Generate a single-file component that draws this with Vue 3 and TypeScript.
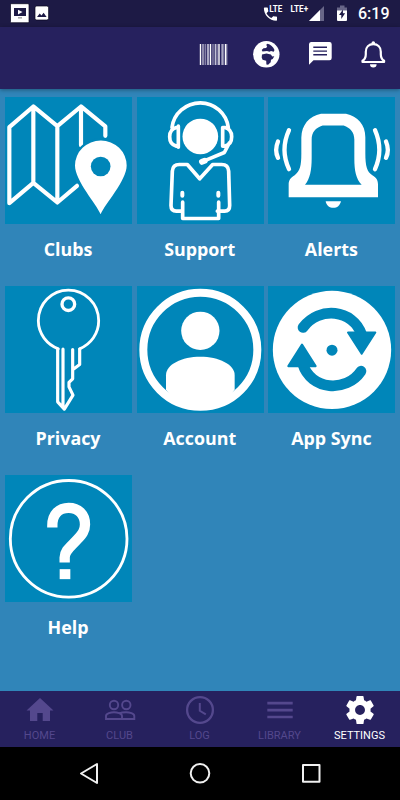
<script setup lang="ts">
interface Item {
  id: string
  label: string
  box: string
}

const items: Item[] = [
  { id: 'clubs', label: 'Clubs', box: '14 21 381 381' },
  { id: 'support', label: 'Support', box: '8 21 381 381' },
  { id: 'alerts', label: 'Alerts', box: '6 21 381 381' },
  { id: 'privacy', label: 'Privacy', box: '14 19 381 381' },
  { id: 'account', label: 'Account', box: '8 19 381 381' },
  { id: 'sync', label: 'App Sync', box: '6 19 381 381' },
  { id: 'help', label: 'Help', box: '14 15 381 381' },
]

const tabs: string[] = ['HOME', 'CLUB', 'LOG', 'LIBRARY', 'SETTINGS']
const active = 'SETTINGS'
</script>

<template>
  <div class="screen">
    <div class="status">
      <svg class="status-left" viewBox="0 0 60 27">
        <rect x="10.5" y="3.7" width="18.5" height="19" rx="1" fill="#fff" stroke="#08071c" stroke-width=".7" />
        <rect x="14" y="8" width="12" height="8" fill="#1d1a45" />
        <path d="M18 9.8l4.5 2.3-4.5 2.4z" fill="#fff" />
        <path d="M18 17.8h4" stroke="#aaa" stroke-width="1.6" />
        <rect x="35" y="6" width="13.6" height="14" rx="1.7" fill="#fff" stroke="#08071c" stroke-width=".7" />
        <path d="M37 17l2.7-3.4 1.8 2 2.1-2.8 3 4.2z" fill="#1d1a45" />
      </svg>
      <svg class="status-right" viewBox="260 0 95 27">
        <path transform="translate(261.7 5.3) scale(.73)" fill="#fff" d="M6.62 10.79c1.44 2.83 3.76 5.14 6.59 6.59l2.2-2.2c.27-.27.67-.36 1.02-.24 1.12.37 2.33.57 3.57.57.55 0 1 .45 1 1V20c0 .55-.45 1-1 1-9.39 0-17-7.61-17-17 0-.55.45-1 1-1h3.5c.55 0 1 .45 1 1 0 1.25.2 2.45.57 3.57.11.35.03.74-.25 1.02l-2.2 2.2z" />
        <text x="269.2" y="12" class="lte" textLength="13" lengthAdjust="spacingAndGlyphs">LTE</text>
        <text x="290.6" y="12" class="lte" textLength="17.5" lengthAdjust="spacingAndGlyphs">LTE+</text>
        <path d="M324 6v15h-15z" fill="#686688" />
        <path d="M320 10v11h-11z" fill="#fff" />
        <path d="M340 5.5h4.5V8H340zM337 7.5h10V12h-10z" fill="#686688" />
        <path d="M337 10.5h10V20a1 1 0 0 1-1 1h-8a1 1 0 0 1-1-1z" fill="#fff" />
        <path d="M343 9.5l-4 5.5h2.3v4l3.8-5.8h-2.2z" fill="#1d1a45" />
      </svg>
      <span class="time">6:19</span>
    </div>

    <header class="header">
      <svg class="header-icons" viewBox="190 27 210 62">
        <g stroke="#d2d1e2">
          <path d="M200.5 44v21M210.5 44v21M219 44v21M225.5 44v21" stroke-width="1.4" stroke="#fff" />
          <path d="M203 44v21M215.3 44v21" stroke-width="1.2" />
          <path d="M208 44v21M222.5 44v21" stroke-width="2.3" stroke="#aaa8c4" />
          <path d="M205.2 44v21M213 44v21M217 44v21M226.8 44v21" stroke-width=".8" />
        </g>
        <circle cx="266.3" cy="54.3" r="13.2" fill="#fff" />
        <g fill="#26215e">
          <path d="M267.5 43.8c3 .6 5.800 3 7 6.200l-.8 1.700-2.700-.7-1.500.8-2.500-.8-4.500.4-.8-1.500 1.800-1.700 2.700-.3 1-1.800-1.200-1z" />
          <path d="M262 54.500l4.500-.9 4.300 1 1.500 1.900 2-.2-1.600 2.600-1.700.8-.3 2.600-2.600 2.500-1.700-.3-.2-3.800-3.600-.9-.9-2.300z" />
        </g>
        <path d="M311 42h18.500a2.200 2.200 0 0 1 2.200 2.200V58a2.200 2.200 0 0 1-2.200 2.200h-16L309 64.700V44.200a2.200 2.200 0 0 1 2-2.200z" fill="#fff" />
        <path d="M313.300 47.200h13.700M313.300 51.100h13.700M313.300 54.800h13.700" stroke="#26215e" stroke-width="1.400" />
        <path d="M362.500 62v-1.200c2.500-1.600 3.300-3.600 3.300-6.600v-2.400c0-4.500 3-7.600 7.500-7.600s7.500 3.100 7.500 7.600v2.400c0 3 .8 5 3.300 6.600V62z" fill="none" stroke="#fff" stroke-width="2.200" stroke-linejoin="round" />
        <path d="M371.500 44v-1a1.800 1.800 0 0 1 3.600 0v1zM370 64.200h6.600a3.300 3.300 0 0 1-6.600 0z" fill="#fff" />
      </svg>
    </header>

    <main class="grid">
      <div v-for="item in items" :key="item.id" class="cell">
        <svg class="tile" :viewBox="item.box">
          <g v-if="item.id === 'clubs'">
            <path d="M315 137v-28L242 49 171 108 99 49 27 111v228l72-61 72 59 59-50M99 52v225M171 108v228M242 50v115" class="line" stroke-width="12.500" />
            <path d="M301 372c-12-29-77-101-77-146a77.500 75 0 0 1 155 0c0 45-66 117-78 146z" fill="#fff" stroke="#0086b9" stroke-width="14" paint-order="stroke" />
            <circle cx="301" cy="229" r="29.500" fill="#0086b9" />
          </g>
          <g v-else-if="item.id === 'support'">
            <circle cx="198" cy="139" r="53.500" fill="#fff" />
            <g class="line" stroke-width="11">
              <path d="M113 112c5-42 42-74 85-74s78 32 84 74M132 108v63M132 112h-6c-13 3-20 14-20 28s7 25 20 28h6zM265 112h7c13 3 20 14 20 28s-7 25-20 28h-7zM285 158l-15 29-55 23" />
              <path d="M145 336v49h108v-49M145 363h-19c-11 0-16-6-16-17l4-103c1-15 8-20 21-20h24l37 43 39-43h27c12 0 20 5 21 20l3 103c0 11-4 17-15 17h-22" />
            </g>
            <path d="M203 215l8-3" stroke="#fff" stroke-width="18" stroke-linecap="round" />
            <path d="M144 308v9M252 308v9" stroke="#fff" stroke-width="12" stroke-linecap="round" />
          </g>
          <g v-else-if="item.id === 'alerts'">
            <path fill="#fff" fill-rule="evenodd" d="M165 71h75c35 8 58 33 58 70v48c0 38 5 56 21 66 13 8 17 15 17 28v38H68v-38c0-13 5-20 18-28 16-12 20-28 20-64v-49c1-37 23-64 59-71zM170 106c-22 7-33 20-33 43v55c0 36-5 61-20 80h170c-17-18-22-42-22-79v-57c0-22-12-35-32-42z" />
            <path fill="#fff" d="M179 333h46c-3 13-12 20-23 20s-21-7-23-20z" />
            <path class="line" stroke-width="13" d="M69 120q-27 59 0 117M36 154q-11 26 0 49M327 120q26 59 0 117M360 154q11 26 0 49" />
          </g>
          <g v-else-if="item.id === 'privacy'" class="line">
            <circle cx="204" cy="73" r="19" stroke-width="10" />
            <path stroke-width="9.500" d="M172 208v158l20 22 26-42-12-25v-13l11-11v-88M238 208v46l-20 15M188 208v174" />
            <path stroke-width="8.500" d="M174 207c-34-13-60-45-60-84 0-51 40-92 90-92s91 41 91 92c0 38-23 70-57 84" />
          </g>
          <g v-else-if="item.id === 'account'">
            <circle cx="198" cy="210" r="171" fill="none" stroke="#fff" stroke-width="24" />
            <circle cx="198" cy="153" r="57.500" fill="#fff" />
            <path d="M95 330v-44c0-32 48-55 103-55s103 23 103 55v44c-53 73-153 73-206 0z" fill="#fff" />
          </g>
          <g v-else-if="item.id === 'sync'">
            <circle cx="198" cy="210" r="177.500" fill="#fff" />
            <circle cx="198" cy="211" r="16.500" fill="#0086b9" />
            <path d="M111 143c48-65 150-55 176 21M285 274c-44 65-151 58-175-22" fill="none" stroke="#0086b9" stroke-width="32" stroke-linecap="round" />
            <path d="M246 158h82l-41 64zM67 259l41-65 41 65z" fill="#0086b9" stroke="#0086b9" stroke-width="6" stroke-linejoin="round" />
          </g>
          <g v-else>
            <circle cx="205" cy="206" r="175" fill="none" stroke="#fff" stroke-width="8.500" />
            <path d="M156 172v-6c0-34 21-53 49-53s49 19 49 50c0 19-8 29-24 46-20 22-37 32-37 53v15" fill="none" stroke="#fff" stroke-width="31" />
            <path d="M178 297h32v30h-32z" fill="#fff" />
          </g>
        </svg>
        <span class="label">{{ item.label }}</span>
      </div>
    </main>

    <nav class="tabs">
      <div v-for="tab in tabs" :key="tab" class="tab" :class="{ active: tab === active }">
        <svg class="tab-icon" viewBox="0 0 32 30">
          <path v-if="tab === 'HOME'" fill="currentColor" d="M13.300 26H6V15.500H2.500L16 3l13.500 12.500H26V26h-7.300v-8h-5.400z" />
          <g v-else-if="tab === 'CLUB'" fill="none" stroke="currentColor" stroke-width="1.900">
            <circle cx="10" cy="10" r="4.200" />
            <circle cx="22.300" cy="10" r="4.200" />
            <path d="M2 24v-3c0-2.500 5-3.700 8-3.700s8 1.200 8 3.700v3zM15 18.300c2-.7 4.500-1 7-1 3.500 0 8.300 1.200 8.300 3.700v3H18" />
          </g>
          <g v-else-if="tab === 'LOG'" fill="none" stroke="currentColor" stroke-width="2.300">
            <circle cx="16" cy="15" r="12.900" />
            <path d="M15.800 8v7.800l6 3.500" stroke-width="2" />
          </g>
          <path v-else-if="tab === 'LIBRARY'" d="M3.300 8.200h25.400M3.300 15.100h25.400M3.300 22h25.400" stroke="currentColor" stroke-width="2.700" />
          <path v-else transform="translate(-.9 -1.900) scale(1.410)" fill="currentColor" d="M19.430 12.980c.04-.32.07-.64.07-.98s-.03-.66-.07-.98l2.110-1.650c.19-.15.24-.42.12-.64l-2-3.460c-.12-.22-.39-.3-.61-.22l-2.490 1c-.52-.4-1.080-.73-1.690-.98l-.38-2.650C14.460 2.180 14.250 2 14 2h-4c-.25 0-.46.18-.49.42l-.38 2.650c-.61.25-1.170.59-1.690.98l-2.490-1c-.23-.09-.49 0-.61.22l-2 3.460c-.13.22-.07.49.12.64l2.110 1.650c-.04.32-.07.65-.07.98s.03.66.07.98l-2.110 1.650c-.19.15-.24.42-.12.64l2 3.460c.12.22.39.3.61.22l2.490-1c.52.4 1.080.73 1.690.98l.38 2.650c.03.24.24.42.49.42h4c.25 0 .46-.18.49-.42l.38-2.650c.61-.25 1.170-.59 1.690-.98l2.490 1c.23.09.49 0 .61-.22l2-3.460c.12-.22.07-.49-.12-.64l-2.110-1.650zM12 15.500c-1.930 0-3.500-1.570-3.500-3.500s1.570-3.500 3.500-3.500 3.500 1.570 3.500 3.500-1.570 3.500-3.500 3.500z" />
        </svg>
        <span>{{ tab }}</span>
      </div>
    </nav>

    <div class="system">
      <svg viewBox="0 0 400 53">
        <g fill="none" stroke="#f0f0f0" stroke-width="2" stroke-linejoin="round">
          <path d="M81 26.500L97 17v19z" />
          <circle cx="200" cy="26.300" r="9.300" />
          <rect x="303" y="18" width="16.500" height="16.700" />
        </g>
      </svg>
    </div>
  </div>
</template>

<style>
body {
  margin: 0;
}
</style>

<style scoped>
.screen {
  width: 400px;
  height: 800px;
  display: flex;
  flex-direction: column;
  overflow: hidden;
  background: #3085b9;
  font-family: Roboto, sans-serif;
}
.status {
  flex: none;
  height: 27px;
  background: #1d1a45;
  display: flex;
  align-items: center;
}
.status-left {
  width: 60px;
  height: 27px;
  margin-right: 200px;
}
.status-right {
  width: 95px;
  height: 27px;
}
.lte {
  fill: #fff;
  font: 700 8.500px Roboto, sans-serif;
}
.time {
  margin-left: 3px;
  padding-top: 1px;
  color: #fff;
  font-size: 16px;
  line-height: 26px;
  font-weight: 500;
}
.header {
  flex: none;
  height: 62px;
  display: flex;
  justify-content: flex-end;
  background: #26215e;
  box-shadow: 0 1px 4px rgba(0, 0, 0, 0.35);
}
.header-icons {
  width: 210px;
  height: 62px;
}
.grid {
  flex: 1;
  min-height: 0;
  display: grid;
  grid-template-columns: repeat(3, 1fr);
  grid-auto-rows: 189px;
  padding: 8px 2.300px 0 2.700px;
}
.cell {
  display: flex;
  flex-direction: column;
  align-items: center;
}
.tile {
  width: 127px;
  height: 127.300px;
  background: #0086b9;
}
.line {
  fill: none;
  stroke: #fff;
  stroke-linejoin: round;
  stroke-linecap: round;
}
.label {
  margin-top: 12.700px;
  margin-right: 1px;
  color: #fff;
  font: 700 17.850px/25px "Open Sans", "Noto Sans", sans-serif;
}
.tabs {
  flex: none;
  height: 56px;
  display: grid;
  grid-template-columns: repeat(5, 1fr);
  background: #26215e;
}
.tab {
  display: flex;
  flex-direction: column;
  align-items: center;
  padding-top: 4px;
  color: #54488d;
  font-size: 11px;
  line-height: 13px;
}
.tab.active {
  color: #fff;
}
.tab span {
  margin-right: 1px;
}
.tab-icon {
  width: 32px;
  height: 30px;
  margin-bottom: 4px;
}
.system {
  flex: none;
  height: 53px;
  background: #000;
}
.system svg {
  display: block;
  width: 400px;
  height: 53px;
}
</style>
